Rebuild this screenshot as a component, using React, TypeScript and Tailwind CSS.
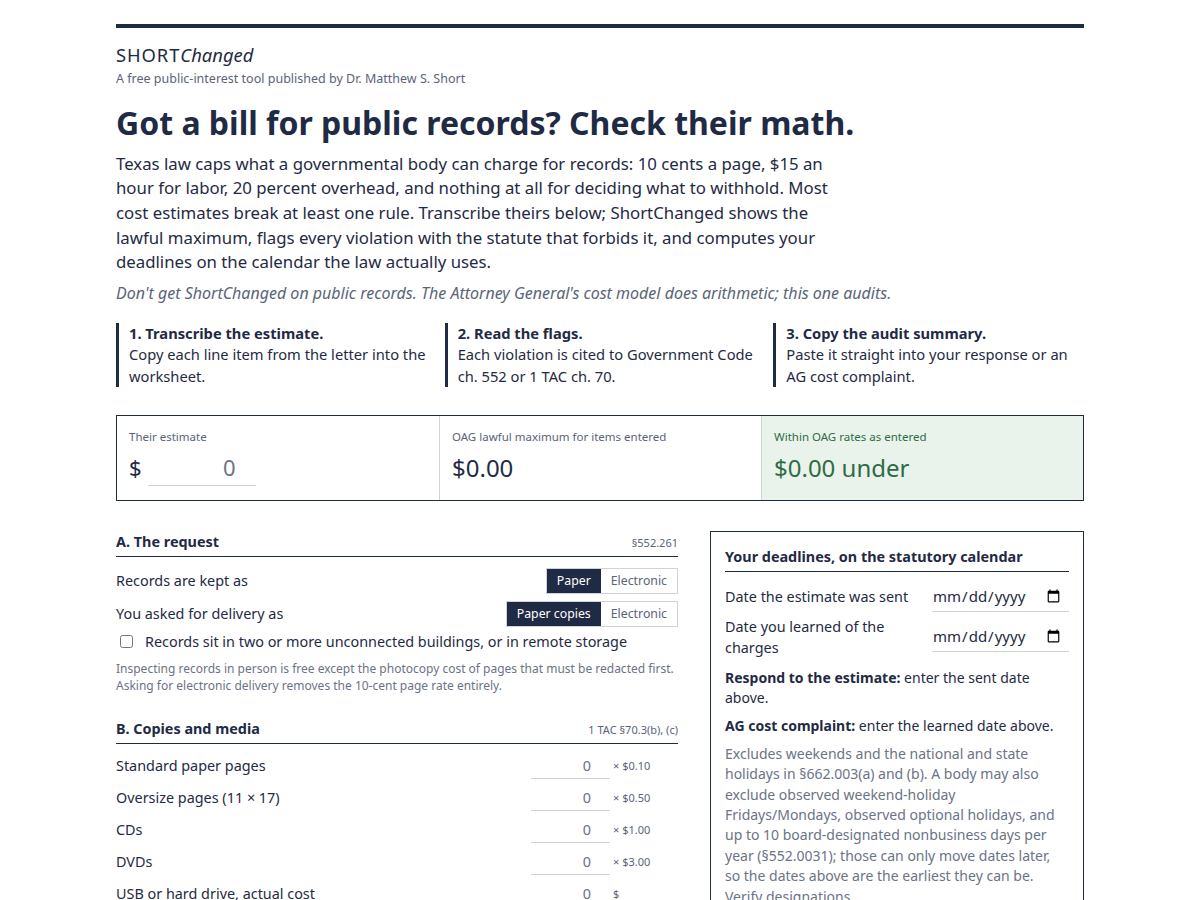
import { useState } from 'react'

const font = { fontFamily: '"Noto Sans", "Open Sans", sans-serif' }

function Segmented({ options, value, onChange }: { options: string[]; value: string; onChange: (v: string) => void }) {
  return (
    <div className="flex border border-[#cfd4dc]">
      {options.map((opt) => (
        <button
          key={opt}
          onClick={() => onChange(opt)}
          className={
            opt === value
              ? 'h-[24px] bg-[#1f2a44] px-[10px] text-[12.3px] text-white'
              : 'h-[24px] bg-white px-[10px] text-[12.3px] text-[#5a6477]'
          }
        >
          {opt}
        </button>
      ))}
    </div>
  )
}

function SectionHead({ title, cite }: { title: string; cite: string }) {
  return (
    <div className="flex items-baseline justify-between border-b border-[#1f2a44] pb-[3px]">
      <h2 className="text-[14.4px] font-bold text-[#1f2a44]">{title}</h2>
      <span className="text-[11px] text-[#5a6477]">{cite}</span>
    </div>
  )
}

const media = [
  { label: 'Standard paper pages', rate: '× $0.10' },
  { label: 'Oversize pages (11 × 17)', rate: '× $0.50' },
  { label: 'CDs', rate: '× $1.00' },
  { label: 'DVDs', rate: '× $3.00' },
  { label: 'USB or hard drive, actual cost', rate: '$' },
]

const steps = [
  { title: '1. Transcribe the estimate.', body: 'Copy each line item from the letter into the worksheet.' },
  { title: '2. Read the flags.', body: 'Each violation is cited to Government Code ch. 552 or 1 TAC ch. 70.' },
  { title: '3. Copy the audit summary.', body: 'Paste it straight into your response or an AG cost complaint.' },
]

export default function App() {
  const [kept, setKept] = useState('Paper')
  const [delivery, setDelivery] = useState('Paper copies')

  return (
    <div style={font} className="min-h-screen bg-white text-[#1f2a44]">
      <div className="mx-auto w-[968px] pt-6">
        <div className="h-1 bg-[#1f2a44]" />

        <header className="mt-[15px]">
          <div className="text-[18.4px] leading-6 text-[#1f2a44]">
            <span className="tracking-[0.05em]">SHORT</span>
            <span className="italic">Changed</span>
          </div>
          <p className="mt-[3px] text-[12.5px] text-[#5a6477]">A free public-interest tool published by Dr. Matthew S. Short</p>
        </header>

        <h1 className="mt-[13px] text-[32px] font-bold leading-[42px] text-[#1f2a44]">
          Got a bill for public records? Check their math.
        </h1>

        <p className="mt-[8px] max-w-[728px] text-[16.8px] leading-[24.6px] text-[#1f2a44]">
          Texas law caps what a governmental body can charge for records: 10 cents a page, $15 an hour for labor, 20
          percent overhead, and nothing at all for deciding what to withhold. Most cost estimates break at least one
          rule. Transcribe theirs below; ShortChanged shows the lawful maximum, flags every violation with the statute
          that forbids it, and computes your deadlines on the calendar the law actually uses.
        </p>
        <p className="mt-[6px] text-[16px] italic text-[#5a6477]">
          Don't get ShortChanged on public records. The Attorney General's cost model does arithmetic; this one audits.
        </p>

        <div className="mt-[18px] grid grid-cols-3 gap-[18px]">
          {steps.map((s) => (
            <div key={s.title} className="border-l-[3px] border-[#1f2a44] pl-[10px] text-[14.7px] leading-[21.5px]">
              <div className="font-bold">{s.title}</div>
              <div>{s.body}</div>
            </div>
          ))}
        </div>

        <div className="mt-[28px] grid h-[86px] grid-cols-3 border border-[#1f2a44]">
          <div className="px-3 pt-[12px]">
            <div className="text-[11.5px] text-[#5a6477]">Their estimate</div>
            <div className="mt-[3px] flex items-center gap-[6px]">
              <span className="text-[22px]">$</span>
              <input
                defaultValue="0"
                className="h-[38px] w-[108px] border-b border-[#cfd4dc] pr-[20px] text-right text-[22px] text-[#6b7280] outline-none"
              />
            </div>
          </div>
          <div className="border-l border-[#cfd4dc] px-3 pt-[12px]">
            <div className="text-[11.5px] text-[#5a6477]">OAG lawful maximum for items entered</div>
            <div className="mt-[5px] text-[24px]">$0.00</div>
          </div>
          <div className="border-l border-[#cfd4dc] bg-[#e9f3ec] px-3 pt-[12px]">
            <div className="text-[11.5px] text-[#2f6b45]">Within OAG rates as entered</div>
            <div className="mt-[5px] text-[24px] text-[#2f6b45]">$0.00 under</div>
          </div>
        </div>

        <div className="mt-[30px] flex items-start gap-8">
          <div className="w-[562px]">
            <section>
              <SectionHead title="A. The request" cite="§552.261" />
              <div className="mt-[11px] flex items-center justify-between">
                <span className="text-[14.4px]">Records are kept as</span>
                <Segmented options={['Paper', 'Electronic']} value={kept} onChange={setKept} />
              </div>
              <div className="mt-[7px] flex items-center justify-between">
                <span className="text-[14.4px]">You asked for delivery as</span>
                <Segmented options={['Paper copies', 'Electronic']} value={delivery} onChange={setDelivery} />
              </div>
              <label className="mt-[4px] flex items-center gap-[12px] pl-[4px] text-[14.4px]">
                <input type="checkbox" className="h-[13px] w-[13px]" />
                Records sit in two or more unconnected buildings, or in remote storage
              </label>
              <p className="mt-[8px] text-[12px] leading-[17px] text-[#6b7385]">
                Inspecting records in person is free except the photocopy cost of pages that must be redacted first.
                Asking for electronic delivery removes the 10-cent page rate entirely.
              </p>
            </section>

            <section className="mt-[24px]">
              <SectionHead title="B. Copies and media" cite="1 TAC §70.3(b), (c)" />
              <div className="mt-[6px]">
                {media.map((m) => (
                  <div key={m.label} className="flex h-8 items-center">
                    <span className="flex-1 text-[14.4px]">{m.label}</span>
                    <input
                      defaultValue="0"
                      className="h-[26px] w-[79px] border-b border-[#cfd4dc] pr-[19px] text-right text-[14.4px] text-[#6b7280] outline-none"
                    />
                    <span className="ml-[3px] w-[65px] text-[11px] text-[#5a6477]">{m.rate}</span>
                  </div>
                ))}
              </div>
            </section>
          </div>

          <aside className="w-[374px] border border-[#1f2a44] px-[14px] pt-[14px] pb-4">
            <h2 className="border-b border-[#1f2a44] pb-[3px] text-[14.4px] font-bold">
              Your deadlines, on the statutory calendar
            </h2>
            <div className="mt-[10px] flex items-center justify-between">
              <span className="text-[14.4px]">Date the estimate was sent</span>
              <input type="date" className="h-[30px] w-[137px] border-b border-[#cfd4dc] pr-[6px] text-[15px] outline-none" />
            </div>
            <div className="mt-[4px] flex items-center justify-between">
              <span className="w-[180px] text-[14.4px] leading-[21px]">Date you learned of the charges</span>
              <input type="date" className="h-[30px] w-[137px] border-b border-[#cfd4dc] pr-[6px] text-[15px] outline-none" />
            </div>
            <p className="mt-[10px] text-[14px] leading-[20px]">
              <b>Respond to the estimate:</b> enter the sent date above.
            </p>
            <p className="mt-[8px] text-[14px] leading-[20px]">
              <b>AG cost complaint:</b> enter the learned date above.
            </p>
            <p className="mt-[8px] text-[14px] leading-[20.4px] text-[#6b7385]">
              Excludes weekends and the national and state holidays in §662.003(a) and (b). A body may also exclude
              observed weekend-holiday Fridays/Mondays, observed optional holidays, and up to 10 board-designated
              nonbusiness days per year (§552.0031); those can only move dates later, so the dates above are the earliest
              they can be. Verify designations.
            </p>
          </aside>
        </div>
      </div>
    </div>
  )
}
